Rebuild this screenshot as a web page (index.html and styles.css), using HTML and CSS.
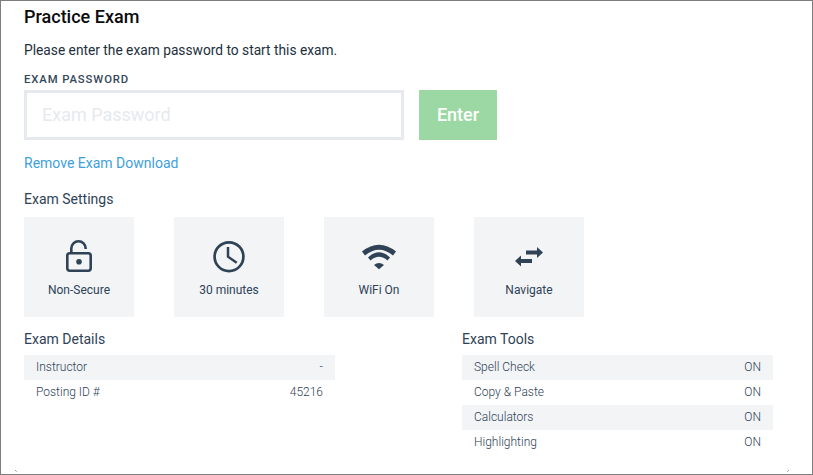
FILE: index.html
```html
<!DOCTYPE html>
<html lang="en">
<head>
<meta charset="utf-8">
<title>Practice Exam</title>
<link rel="stylesheet" href="styles.css">
</head>
<body>
<main class="frame">
  <h1 class="title">Practice Exam</h1>
  <p class="intro">Please enter the exam password to start this exam.</p>
  <div class="field-label">EXAM PASSWORD</div>
  <form class="password-row">
    <input class="password-input" type="text" placeholder="Exam Password">
    <button class="enter-btn" type="button">Enter</button>
  </form>
  <a class="remove-link" href="#">Remove Exam Download</a>
  <h2 class="section-title settings-title">Exam Settings</h2>
  <div class="tiles">
    <div class="tile">
      <svg class="tile-icon" viewBox="0 0 36 36" width="36" height="36" aria-hidden="true">
        <path d="M10.300 14V9.500a7.200 7.200 0 0 1 14.400 0V10" fill="none" stroke="#2f4256" stroke-width="2.600"/>
        <rect x="6.300" y="14.300" width="23.400" height="17.400" rx="2.400" fill="none" stroke="#2f4256" stroke-width="2.600"/>
        <circle cx="18" cy="22.700" r="2.800" fill="#2f4256"/>
      </svg>
      <span class="tile-label">Non-Secure</span>
    </div>
    <div class="tile">
      <svg class="tile-icon" viewBox="0 0 36 36" width="36" height="36" aria-hidden="true">
        <circle cx="18" cy="17.700" r="14.400" fill="none" stroke="#2f4256" stroke-width="2.700"/>
        <path d="M17 8V17.700L25.700 23.700" fill="none" stroke="#2f4256" stroke-width="2.500"/>
      </svg>
      <span class="tile-label">30 minutes</span>
    </div>
    <div class="tile">
      <svg class="tile-icon" viewBox="0 0 36 36" width="36" height="36" aria-hidden="true">
        <path d="M1 12.500Q18 -1 35 12.500L32 16.500Q18 5 4 16.500Z" fill="#2f4256"/>
        <path d="M7 18.500Q18 8 29 18.500L26.500 21.500Q18 14 9.500 21.500Z" fill="#2f4256"/>
        <path d="M13 26Q18 22 23 26L18 30.300Z" fill="#2f4256"/>
      </svg>
      <span class="tile-label">WiFi On</span>
    </div>
    <div class="tile">
      <svg class="tile-icon" viewBox="0 0 36 36" width="36" height="36" aria-hidden="true">
        <path d="M15 11.600H26V8L32 13.500L26 19V15.400H15Z" fill="#2f4256"/>
        <path d="M21 20.100H10V16.500L4 22L10 27.500V23.900H21Z" fill="#2f4256"/>
      </svg>
      <span class="tile-label">Navigate</span>
    </div>
  </div>
  <div class="columns">
    <section class="detail-col">
      <h2 class="section-title">Exam Details</h2>
      <div class="rows">
        <div class="row"><span>Instructor</span><span>-</span></div>
        <div class="row"><span>Posting ID #</span><span>45216</span></div>
      </div>
    </section>
    <section class="detail-col">
      <h2 class="section-title">Exam Tools</h2>
      <div class="rows">
        <div class="row"><span>Spell Check</span><span>ON</span></div>
        <div class="row"><span>Copy &amp; Paste</span><span>ON</span></div>
        <div class="row"><span>Calculators</span><span>ON</span></div>
        <div class="row"><span>Highlighting</span><span>ON</span></div>
      </div>
    </section>
  </div>
</main>
</body>
</html>
```
FILE: styles.css
```css
* { box-sizing: border-box; }
html, body { margin: 0; padding: 0; background: #fff; }
body { font-family: Roboto, "Liberation Sans", sans-serif; color: #2f4256; overflow: hidden; }
.frame {
  position: relative;
  width: 813px;
  height: 475px;
  border: 1px solid #7d7d7d;
  padding: 6px 23px 0;
  overflow: hidden;
}
.frame::before, .frame::after {
  content: "";
  position: absolute;
  bottom: 3px;
  width: 1px;
  height: 1px;
  background: #a0a0a0;
}
.frame::before { left: 14px; box-shadow: 1px 1px 0 #b8b8b8; }
.frame::after { right: 23px; box-shadow: -1px 1px 0 #b8b8b8; }
.title { margin: 0; font-size: 18px; line-height: 20px; font-weight: 500; color: #0b0b0b; }
.intro { margin: 15px 0 0; font-size: 13.75px; line-height: 16px; color: #22303c; }
.field-label { margin-top: 15px; font-size: 11.3px; line-height: 13px; font-weight: 500; letter-spacing: .9px; color: #34475a; }
.password-row { display: flex; gap: 15px; margin: 4px 0 0; }
.password-input {
  width: 380px;
  height: 50px;
  border: 3px solid #e6eaee;
  border-radius: 0;
  padding: 0 15px 2px;
  outline: none;
  font: 400 18px Roboto, sans-serif;
  background: #fff;
}
.password-input::placeholder { color: #e6eaee; opacity: 1; }
.enter-btn {
  width: 78px;
  height: 50px;
  border: 0;
  padding: 0 0 1px;
  background: #9cd8a3;
  color: #fff;
  font: 500 18px Roboto, sans-serif;
}
.remove-link { display: block; margin-top: 15px; font-size: 14px; line-height: 16px; color: #3e9fdc; text-decoration: none; }
.section-title { margin: 0; font-size: 14px; line-height: 16px; font-weight: 400; color: #2f4256; }
.settings-title { margin-top: 20px; }
.tiles { display: flex; gap: 40px; margin-top: 10px; }
.tile {
  width: 110px;
  height: 100px;
  background: #f2f4f6;
  display: flex;
  flex-direction: column;
  align-items: center;
  padding-top: 22px;
}
.tile-icon { display: block; }
.tile-label { margin-top: 8px; font-size: 12px; line-height: 14px; color: #2f4256; }
.columns { display: grid; grid-template-columns: 311px 311px; column-gap: 127px; margin-top: 14px; }
.rows { margin-top: 8px; }
.row {
  display: flex;
  justify-content: space-between;
  height: 25px;
  padding: 0 12px 2px;
  align-items: center;
  font-size: 12px;
  font-weight: 300;
  color: #2f4256;
}
.row:nth-child(odd) { background: #f2f4f6; }
```
